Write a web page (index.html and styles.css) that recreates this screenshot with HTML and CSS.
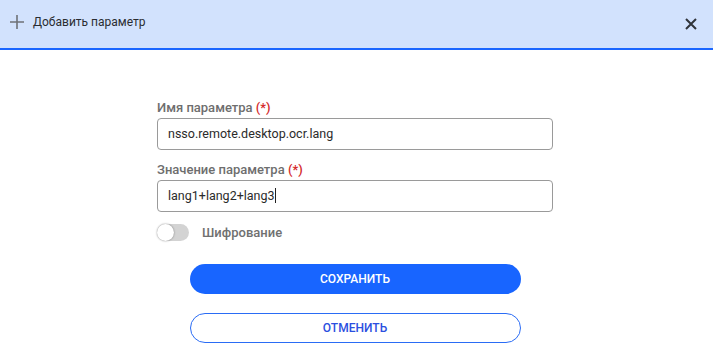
FILE: index.html
```html
<!DOCTYPE html>
<html lang="ru">
<head>
<meta charset="utf-8">
<meta name="viewport" content="width=device-width, initial-scale=1.0"/>
<link rel="stylesheet" href="styles.css">
</head>
<body>
<div class="dialog">
  <div class="dialog-header">
    <div class="dialog-title">
      <svg class="plus-icon" width="14" height="14" viewBox="0 0 14 14">
        <path d="M7 0V14M0 7H14" stroke="#6f7277" stroke-width="1.6"/>
      </svg>
      <span>Добавить параметр</span>
    </div>
    <svg class="close-icon" width="12" height="12" viewBox="0 0 12 12">
      <path d="M1 1L11 11M11 1L1 11" stroke="#30343a" stroke-width="2"/>
    </svg>
  </div>

  <div class="form">
    <label class="label">Имя параметра <span class="req">(*)</span></label>
    <div class="field">nsso.remote.desktop.ocr.lang</div>

    <label class="label label-next">Значение параметра <span class="req">(*)</span></label>
    <div class="field">lang1+lang2+lang3<span class="caret"></span></div>

    <div class="switch-row">
      <span class="switch"><span class="knob"></span></span>
      <span class="switch-label">Шифрование</span>
    </div>

    <div class="buttons">
      <button class="btn btn-save">СОХРАНИТЬ</button>
      <button class="btn btn-cancel">ОТМЕНИТЬ</button>
    </div>
  </div>
</div>
</body>
</html>
```

FILE: styles.css
```css
body {
  margin: 0;
  background: #fff;
  font-family: Roboto, "Liberation Sans", sans-serif;
}

.dialog-header {
  height: 48px;
  background-color: #d2e2fd;
  border-bottom: 2px solid #1b66ff;
  display: flex;
  align-items: center;
  justify-content: space-between;
  padding: 0 16px 0 10px;
}

.dialog-title {
  display: flex;
  align-items: center;
  gap: 9px;
  font-size: 12px;
  color: #2a2d31;
  margin-top: -4px;
}

.form {
  width: 396px;
  margin-left: 157px;
  padding-top: 50px;
}

.label {
  display: block;
  font-size: 13px;
  line-height: 16px;
  font-weight: 500;
  color: #6e6e6e;
  margin-bottom: 2px;
}

.label-next {
  margin-top: 12px;
}

.req {
  color: #d4292a;
}

.field {
  height: 30px;
  border: 1px solid #9a9a9a;
  border-radius: 4px;
  padding: 0 10px;
  font-size: 12.5px;
  line-height: 30px;
  color: #2b2b2b;
}

.caret {
  display: inline-block;
  width: 1px;
  height: 15px;
  background: #222;
  vertical-align: -3px;
}

.switch-row {
  display: flex;
  align-items: center;
  margin-top: 12px;
  gap: 13px;
}

.switch {
  position: relative;
  width: 32px;
  height: 17px;
  border-radius: 9px;
  background-color: #d3d3d3;
}

.knob {
  position: absolute;
  left: 0;
  top: 0;
  width: 17px;
  height: 17px;
  border-radius: 50%;
  background: #fff;
  box-shadow: 0 0 2px rgba(0, 0, 0, 0.45);
}

.switch-label {
  font-size: 13px;
  font-weight: 500;
  color: #707070;
}

.buttons {
  display: flex;
  flex-direction: column;
  align-items: center;
  gap: 19px;
  margin-top: 23px;
}

.btn {
  width: 331px;
  height: 30px;
  border-radius: 15px;
  font-family: Roboto, "Liberation Sans", sans-serif;
  font-size: 12px;
  font-weight: 500;
  cursor: pointer;
}

.btn-save {
  background-color: #1865ff;
  border: none;
  color: #fff;
}

.btn-cancel {
  background-color: #fff;
  border: 1px solid #2a6cf5;
  color: #2b4fe0;
}
```
